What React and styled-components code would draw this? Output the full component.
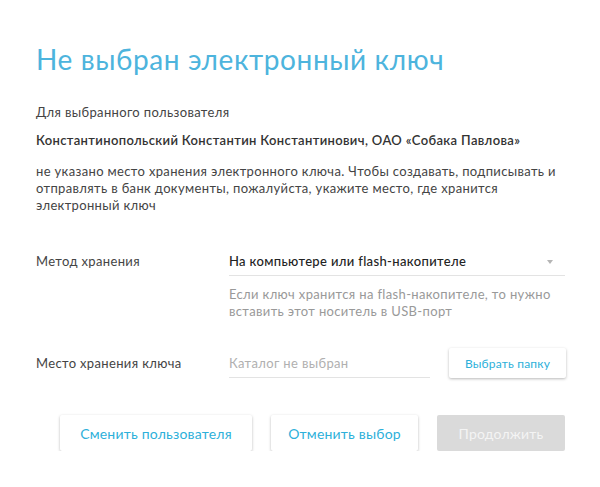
import React from 'react'
import styled, { createGlobalStyle } from 'styled-components';

const GlobalStyle = createGlobalStyle`
  html, body {
    margin: 0;
    padding: 0;
    background: #fff;
  }
  body {
    font-family: Lato, "Noto Sans", sans-serif;
    color: #444;
    letter-spacing: 0.35px;
  }
`;

const App = () => {
    return (
        <>
            <GlobalStyle/>
            <Dialog>
                <Title>Не выбран электронный ключ</Title>
                <Lead>Для выбранного пользователя</Lead>
                <UserName>Константинопольский Константин Константинович, ОАО «Собака Павлова»</UserName>
                <Text>
                    не указано место хранения электронного ключа. Чтобы создавать, подписывать и<br/>
                    отправлять в банк документы, пожалуйста, укажите место, где хранится<br/>
                    электронный ключ
                </Text>

                <Form>
                    <Row>
                        <Label $top={7}>Метод хранения</Label>
                        <Control>
                            <Select>
                                <span>На компьютере или flash-накопителе</span>
                                <Arrow/>
                            </Select>
                            <Hint>
                                Если ключ хранится на flash-накопителе, то нужно<br/>
                                вставить этот носитель в USB-порт
                            </Hint>
                        </Control>
                    </Row>

                    <Row $center>
                        <Label>Место хранения ключа</Label>
                        <PathField>
                            <Input placeholder="Каталог не выбран" readOnly/>
                            <Button $small>Выбрать папку</Button>
                        </PathField>
                    </Row>
                </Form>

                <Actions>
                    <Button $width={192}>Сменить пользователя</Button>
                    <Button $width={147}>Отменить выбор</Button>
                    <Button $width={128} disabled>Продолжить</Button>
                </Actions>
            </Dialog>
        </>
    )
}

const Dialog = styled.div`
  width: 600px;
  box-sizing: border-box;
  padding: 39px 35px 0 36px;
`;

const Title = styled.h1`
  margin: 0;
  font-size: 28px;
  line-height: 40px;
  font-weight: 400;
  letter-spacing: 0.6px;
  color: #4db4dd;
`;

const Lead = styled.p`
  margin: 25px 0 0;
  font-size: 13px;
  line-height: 17px;
  color: #444;
`;

const UserName = styled(Lead)`
  margin-top: 11px;
  font-weight: 600;
  color: #333;
`;

const Text = styled(Lead)`
  margin-top: 14px;
`;

const Form = styled.div`
  margin-top: 32px;
`;

const Row = styled.div`
  display: flex;
  align-items: ${p => p.$center ? 'center' : 'flex-start'};
  margin-bottom: 28px;
`;

const Label = styled.div`
  width: 193px;
  flex-shrink: 0;
  font-size: 13px;
  line-height: 17px;
  padding-top: ${p => p.$top || 0}px;
  color: #444;
`;

const Control = styled.div`
  flex: 1;
`;

const Select = styled.div`
  display: flex;
  align-items: center;
  justify-content: space-between;
  padding: 7px 12px 5px 0;
  line-height: 17px;
  font-size: 13px;
  font-weight: 500;
  color: #222;
  border-bottom: 1px solid #e3e3e3;
`;

const Arrow = styled.i`
  width: 0;
  height: 0;
  border-left: 3.5px solid transparent;
  border-right: 3.5px solid transparent;
  border-top: 4px solid #b5b5b5;
`;

const Hint = styled.div`
  margin-top: 10px;
  font-size: 13px;
  line-height: 17px;
  color: #999;
`;

const PathField = styled.div`
  flex: 1;
  display: flex;
  align-items: center;
  gap: 19px;
`;

const Input = styled.input`
  width: 201px;
  box-sizing: border-box;
  height: 30px;
  padding: 0;
  border: 0;
  border-bottom: 1px solid #e3e3e3;
  outline: none;
  font-family: inherit;
  font-size: 13px;
  letter-spacing: inherit;
  color: #333;
  background: transparent;

  &::placeholder {
    color: #b0b0b0;
  }
`;

const Button = styled.button`
  width: ${p => p.$small ? 117 : p.$width}px;
  height: ${p => p.$small ? 30 : 36}px;
  padding: 0;
  border: 0;
  border-radius: 2px;
  font-family: inherit;
  font-size: ${p => p.$small ? 12 : 14}px;
  letter-spacing: 0.2px;
  color: #2db0da;
  background: #fff;
  box-shadow: 0 1px 3px rgba(0, 0, 0, 0.28);
  cursor: pointer;

  &:disabled {
    color: #f4f4f4;
    background: #dadada;
    box-shadow: none;
    cursor: default;
  }
`;

const Actions = styled.div`
  display: flex;
  justify-content: flex-end;
  gap: 19px;
  margin-top: 37px;
`;

export default App;
